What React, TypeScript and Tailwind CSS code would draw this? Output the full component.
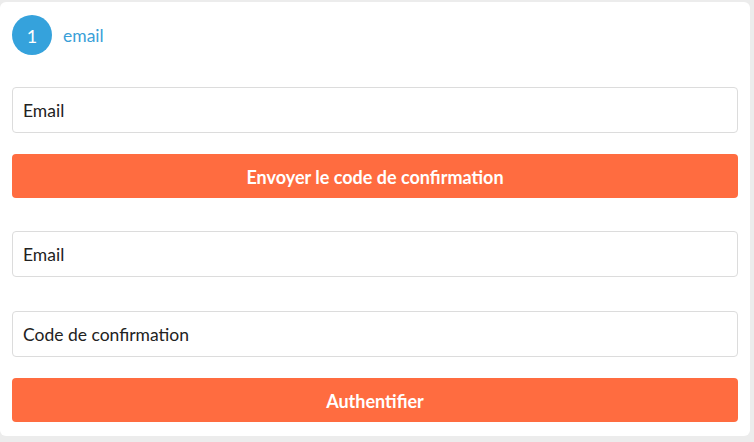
import React from 'react';

export default function App() {
  return (
    <main className="w-[754px] h-[442px] bg-[#ececec] pt-[2px] font-['Lato','Noto_Sans',sans-serif] overflow-hidden">
      <div className="w-[750px] h-[434px] bg-white rounded-md px-3 pt-[13px]">
        {/* step header */}
        <div className="flex items-center gap-[11px] h-10">
          <div className="w-10 h-10 rounded-full bg-[#35a2dc] text-white flex items-center justify-center text-[18px] pt-[2px]">1</div>
          <span className="text-[#3a9fd8] text-[17.5px] pt-[3px]">email</span>
        </div>

        <div className="mt-[32px] h-[46px] border border-[#dcdcdc] rounded flex items-center px-[10px] pt-[3px] text-[17.5px] text-[#222]">Email</div>
        <button className="mt-[21px] w-full h-[44px] bg-[#ff6c40] rounded text-white font-bold text-[18px] pt-[3px]">
          Envoyer le code de confirmation
        </button>

        <div className="mt-[33px] h-[46px] border border-[#dcdcdc] rounded flex items-center px-[10px] pt-[3px] text-[17.5px] text-[#222]">Email</div>
        <div className="mt-[34px] h-[46px] border border-[#dcdcdc] rounded flex items-center px-[10px] pt-[3px] text-[17.5px] text-[#222]">Code de confirmation</div>
        <button className="mt-[21px] w-full h-[44px] bg-[#ff6c40] rounded text-white font-bold text-[18px] pt-[3px]">
          Authentifier
        </button>
      </div>
    </main>
  );
}
